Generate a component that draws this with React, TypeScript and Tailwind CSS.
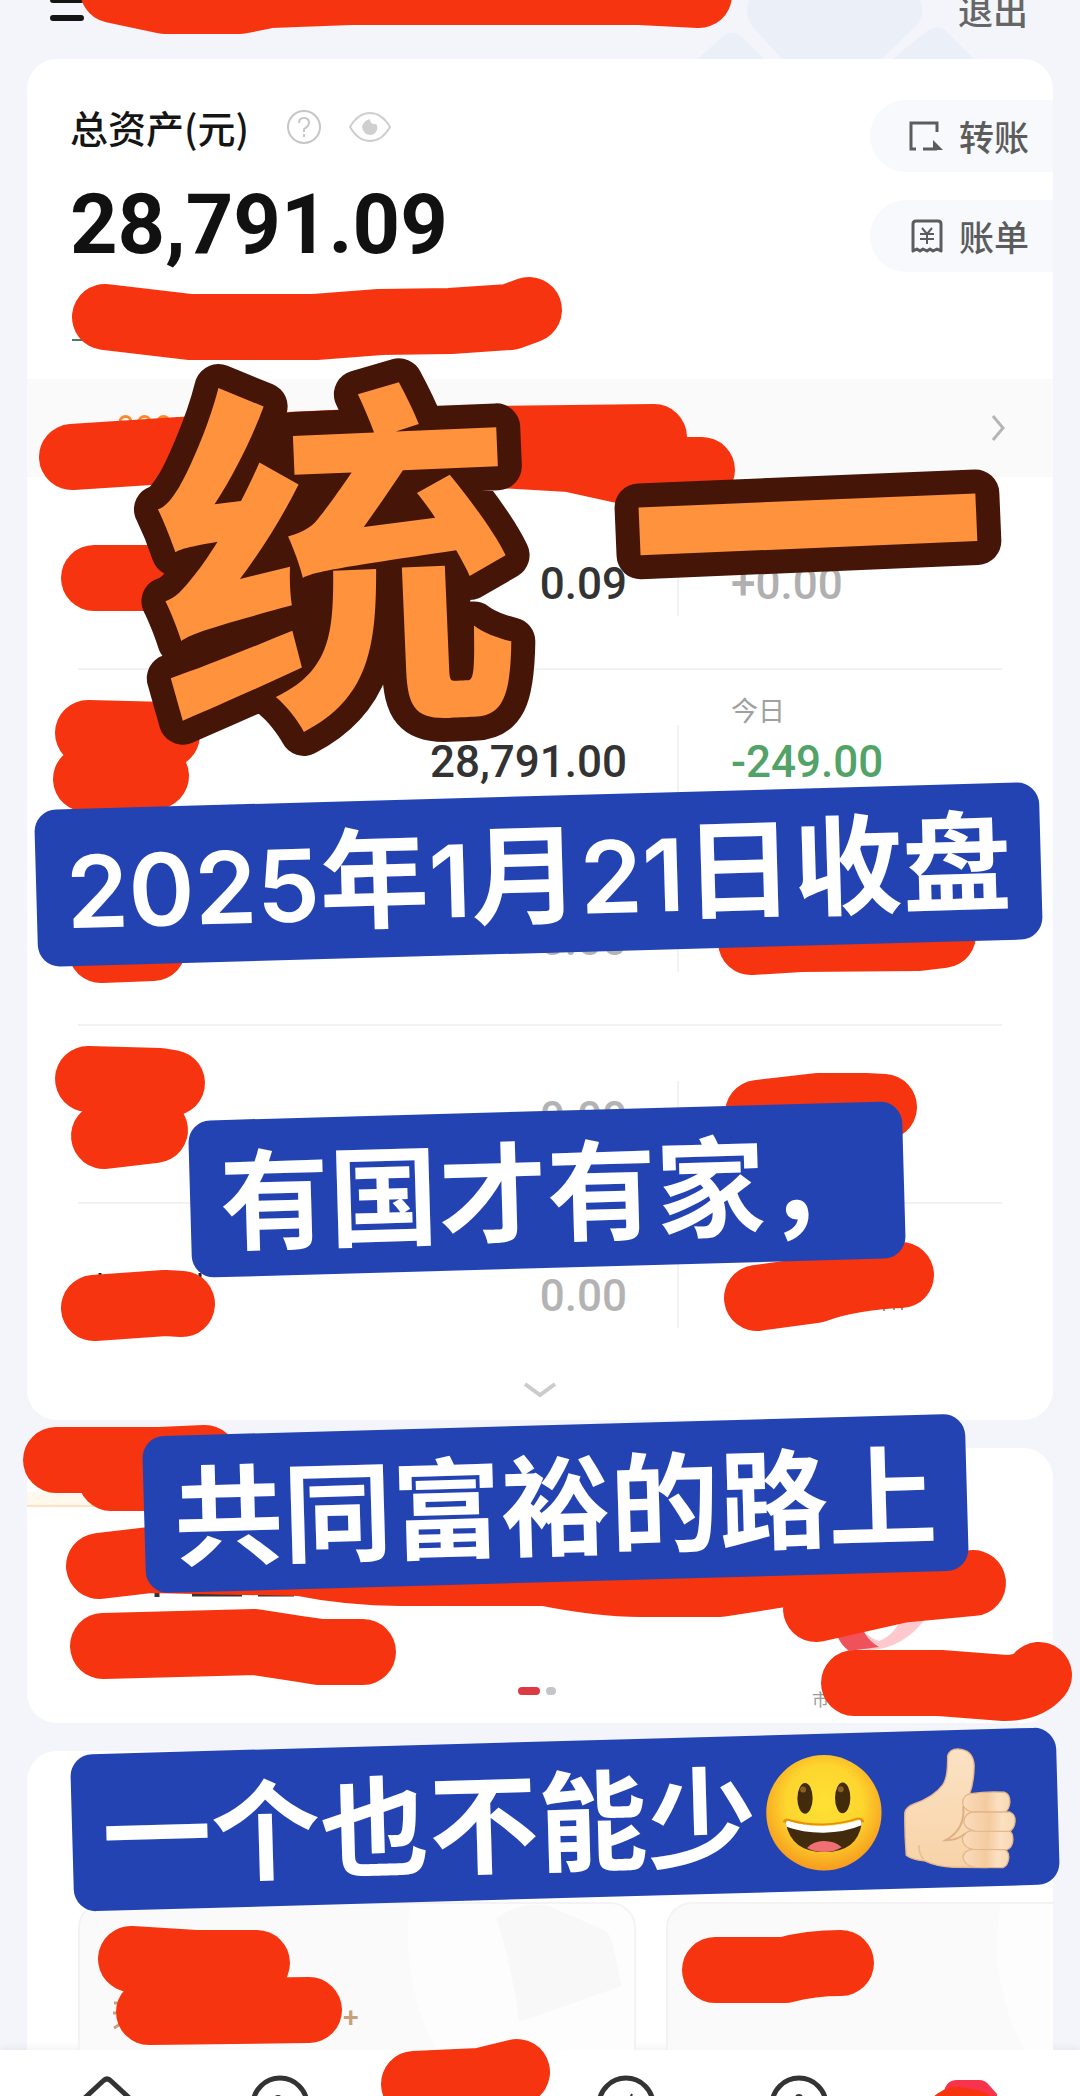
import type { ReactNode } from "react";

const ACCOUNTS = [
  { value: "0.09", active: true, label: "", today: "+0.00", tone: "text-[#b0b0b0]" },
  { value: "28,791.00", active: true, label: "今日", today: "-249.00", tone: "text-[#52a368]" },
  { value: "0.00", active: false, label: "", today: "", tone: "" },
  { value: "0.00", active: false, label: "", today: "", tone: "" },
  { value: "0.00", active: false, label: "", today: "", tone: "" },
];

const STROKES = [
  "M113 -10 L165 1 L240 1 L270 -5 L350 -8 L640 -8 L699 -5",
  "M105 317 L190 327 L315 327 L380 322 L450 321 L510 317 L529 310",
  "M72 457 L180 450 L400 440 L654 437",
  "M500 455 L570 459 L620 470 L702 470",
  "M94 578 L180 578",
  "M88 733 L167 735",
  "M86 779 L156 776",
  "M101 950 L153 948",
  "M751 942 L800 939 L918 938 L943 935",
  "M88 1079 L160 1081 L172 1083",
  "M104 1136 L155 1130",
  "M758 1113 L818 1106 L865 1106 L884 1107",
  "M94 1308 L165 1303 L182 1304",
  "M757 1298 L815 1290 Q850 1277 901 1275",
  "M56 1460 L160 1460 L205 1458",
  "M111 1478 L170 1478",
  "M99 1566 L150 1560 L300 1563 Q350 1573 400 1573 L545 1573 Q600 1584 640 1584 L720 1584 L790 1573",
  "M816 1609 L900 1590 L973 1583",
  "M103 1646 L255 1642 L300 1649 L320 1652 L363 1652",
  "M854 1683 L940 1683 L1005 1688 Q1028 1688 1039 1675",
  "M131 1959 L195 1963 L257 1963",
  "M149 2012 L309 2010",
  "M715 1970 L785 1970 Q810 1963 841 1963",
  "M414 2084 L480 2081 L517 2072",
  "M957 2120 L970 2122",
];

const Header = () => {
  return (
    <header className="relative flex h-[59px] shrink-0 items-start justify-between overflow-hidden pr-[52px] pl-[50px]">
      <svg
        className="absolute top-0 right-[105px] h-[59px] w-[280px]"
        viewBox="695 0 280 59"
        fill="#ebf0f8"
        aria-hidden="true"
      >
        <path d="M749 0 Q744 14 752 26 L782 59 L882 59 L918 24 Q925 14 920 0 Z" />
        <path d="M698 59 L722 37 Q732 28 742 37 L764 59 Z" />
        <path d="M892 59 L926 32 Q936 23 947 32 L974 59 Z" />
      </svg>
      <button aria-label="菜单" className="h-[21px]">
        <svg width="34" height="21" viewBox="0 0 34 21" stroke="#151515" strokeWidth="6" strokeLinecap="round">
          <path d="M3 0 H31 M3 18 H31" />
        </svg>
      </button>
      <button className="relative -mt-2 text-[35px] leading-9 font-medium text-[#666]">退出</button>
    </header>
  );
};

const TransferIcon = () => (
  <svg width="34" height="32" viewBox="0 0 34 32" fill="none" stroke="#5c5c5c" strokeWidth="3">
    <path d="M7 29 H2 V3 H28 V12" />
    <path d="M14 29 H28" />
    <path d="M24 20 L34 30 H24 Z" fill="#5c5c5c" stroke="none" />
  </svg>
);

const BillIcon = () => (
  <svg width="34" height="34" viewBox="0 0 34 34" fill="none" stroke="#5c5c5c" strokeWidth="3" strokeLinejoin="round">
    <path d="M4 32 V5 Q4 2 7 2 H29 Q32 2 32 5 V32 L28 30 L24 32 L21 30 L18 32 L14 30 L11 32 L8 30 Z" />
    <path d="M13 9 L18 15 L23 9 M18 15 V25 M11 15 H25 M11 20 H25" strokeWidth="2" />
  </svg>
);

const ActionButton = ({ icon, children }: { icon: ReactNode; children: ReactNode }) => {
  return (
    <button className="flex h-[72px] items-center rounded-l-full bg-[#f7f9fc] pr-[24px] pl-[39px] text-[35px] leading-none font-medium text-[#5c5c5c]">
      <span className="mr-[16px]">{icon}</span>
      <span className="pb-0.5">{children}</span>
    </button>
  );
};

const Summary = () => {
  return (
    <div className="flex h-[320px] justify-between pl-[43px]">
      <div className="pt-[44px]">
        <div className="flex items-center">
          <h1 className="text-[38px] leading-[48px] font-medium text-[#151515]">总资产(元)</h1>
          <button aria-label="说明" className="ml-[37px]">
            <svg width="36" height="36" viewBox="0 0 36 36" fill="none" stroke="#c6c6c6" strokeWidth="2">
              <circle cx="18" cy="18" r="16" />
              <path d="M13 14 Q13 9 18 9 Q23 9 23 14 Q23 17 18 20 V23 M18 25 V28" />
            </svg>
          </button>
          <button aria-label="隐藏金额" className="ml-[26px]">
            <svg width="44" height="32" viewBox="0 0 44 32" fill="none" stroke="#cfcfcf" strokeWidth="2">
              <path d="M2 16 Q10 2 22 2 Q34 2 42 16 Q34 30 22 30 Q10 30 2 16 Z" />
              <path d="M22 8 Q22 14 28 13 Q30 15 29 19 Q27 24 22 24 Q15 23 14 16 Q15 10 22 8 Z" fill="#cfcfcf" stroke="none" />
            </svg>
          </button>
        </div>
        <div className="mt-[32px] font-[Roboto] text-[83px] leading-[84px] font-bold text-[#111]">28,791.09</div>
      </div>
      <div className="flex flex-col gap-7 pt-[41px]">
        <ActionButton icon={<TransferIcon />}>转账</ActionButton>
        <ActionButton icon={<BillIcon />}>账单</ActionButton>
      </div>
    </div>
  );
};

const AccountRow = ({ account, last }: { account: (typeof ACCOUNTS)[number]; last: boolean }) => {
  return (
    <li
      className={`grid h-[178px] grid-cols-[601fr_323fr] pt-[55px] ${last ? "" : "border-b-2 border-[#f2f2f3]"}`}
    >
      <div
        className={`flex h-[69px] items-end justify-end border-r-2 border-[#f2f2f3] pr-[50px] font-[Roboto] text-[44px] leading-[64px] font-medium ${
          account.active ? "text-[#333]" : "text-[#b3b3b3]"
        }`}
      >
        {account.value}
      </div>
      <div className="flex h-[69px] flex-col justify-end pl-[52px]">
        {account.label && <span className="-mt-9 text-[27px] leading-10 text-[#a0a0a0]">{account.label}</span>}
        <span className={`font-[Roboto] text-[44px] leading-[64px] font-medium ${account.tone}`}>{account.today}</span>
      </div>
    </li>
  );
};

const AssetCard = () => {
  return (
    <section className="mx-[27px] h-[1361px] shrink-0 overflow-hidden rounded-[30px] bg-white">
      <Summary />
      <div className="flex h-[98px] items-center justify-end bg-[#fafafa] pr-[48px]">
        <button aria-label="查看详情">
          <svg width="14" height="28" viewBox="0 0 14 28" fill="none" stroke="#b5b5b5" strokeWidth="3">
            <path d="M2 2 L12 14 L2 26" />
          </svg>
        </button>
      </div>
      <ul className="mx-[51px] mt-[15px]">
        {ACCOUNTS.map((account, i) => (
          <AccountRow key={i} account={account} last={i === ACCOUNTS.length - 1} />
        ))}
      </ul>
      <button aria-label="展开" className="mx-auto block">
        <svg width="34" height="18" viewBox="0 0 34 18" fill="none" stroke="#cbcbcb" strokeWidth="4">
          <path d="M2 2 L17 13 L32 2" />
        </svg>
      </button>
    </section>
  );
};

const PromoCard = () => {
  return (
    <section className="relative mx-[27px] mt-7 flex h-[275px] shrink-0 flex-col overflow-hidden rounded-[30px] bg-white">
      <div className="mt-[44px] h-[15px] w-[90px] border-b-2 border-[#fbe3c4] bg-[#fff8ec]" />
      <svg
        className="absolute right-[106px] bottom-[72px] h-[50px] w-[120px]"
        viewBox="0 0 120 50"
        fill="none"
        aria-hidden="true"
      >
        <path d="M22 18 Q40 36 52 40 Q68 34 76 14 L106 0 Q100 24 74 40 Q50 54 24 46 Z" fill="#fdc9cc" />
        <path d="M6 16 Q8 40 22 50 L52 46 Q34 36 32 12 Z" fill="#f0525c" />
      </svg>
      <div className="mt-auto mb-[28px] flex items-center justify-center gap-1.5 pr-1.5">
        <span className="h-2 w-[22px] rounded-full bg-[#dc3a43]" />
        <span className="h-2 w-2.5 rounded-full bg-[#c5c5c9]" />
      </div>
      <span className="absolute bottom-[12px] left-[785px] text-[17px] leading-6 text-[#999]">市</span>
    </section>
  );
};

const TileArt = () => (
  <svg className="absolute top-0 right-0 h-[150px] w-[230px]" viewBox="0 0 230 150" aria-hidden="true">
    <path d="M6 0 Q-4 80 35 150 H230 V0 Z" fill="#fdfdfd" />
    <path d="M92 14 Q120 -4 145 2 L200 26 Q206 30 208 38 L218 82 L115 118 Q108 60 92 14 Z" fill="#f8f8f8" />
  </svg>
);

const TileCard = () => {
  return (
    <section className="mx-[27px] mt-7 min-h-0 flex-1 overflow-hidden rounded-t-[30px] bg-white pt-[151px] pl-[51px]">
      <div className="flex h-[240px] gap-[30px]">
        <div className="relative w-[558px] shrink-0 overflow-hidden rounded-[26px] border-2 border-[#f3f3f3] bg-[#fafafa]">
          <TileArt />
          <span className="absolute top-[92px] left-[263px] font-[Roboto] text-[28px] leading-[44px] font-medium text-[#c6a17b]">
            +
          </span>
        </div>
        <div className="relative flex-1 overflow-hidden rounded-l-[26px] border-2 border-r-0 border-[#f3f3f3] bg-[#fafafa]">
          <svg className="absolute top-0 right-0 h-[150px] w-[58px]" viewBox="0 0 58 150" aria-hidden="true">
            <path d="M6 0 Q-8 80 32 150 H58 V0 Z" fill="#fdfdfd" />
          </svg>
        </div>
      </div>
    </section>
  );
};

const TabBar = () => {
  return (
    <nav className="grid h-[46px] shrink-0 grid-cols-[repeat(6,173px)] justify-start overflow-hidden bg-white pl-[20px] shadow-[0_-2px_8px_rgba(0,0,0,0.06)]">
      <a href="#home" aria-label="首页" className="flex justify-center pt-[25px]">
        <svg width="72" height="60" viewBox="0 0 72 60" fill="none" stroke="#333" strokeWidth="5">
          <path d="M4 32 L32 6 Q36 2 40 6 L68 32 V58 H4 Z" />
        </svg>
      </a>
      <a href="#market" aria-label="行情" className="flex justify-center pt-[25px]">
        <svg width="60" height="60" viewBox="0 0 60 60" fill="none" stroke="#333" strokeWidth="5">
          <circle cx="30" cy="30" r="27" />
          <circle cx="28" cy="24" r="4" fill="#333" stroke="none" />
        </svg>
      </a>
      <a href="#trade" aria-label="交易" />
      <a href="#news" aria-label="资讯" className="flex justify-center pt-[25px]">
        <svg width="60" height="60" viewBox="0 0 60 60" fill="none" stroke="#333" strokeWidth="5">
          <circle cx="30" cy="30" r="27" />
          <path d="M36 19 L33 26" strokeWidth="2" />
        </svg>
      </a>
      <a href="#finance" aria-label="理财" className="flex justify-center pt-[25px]">
        <svg width="60" height="60" viewBox="0 0 60 60" fill="none" stroke="#333" strokeWidth="5">
          <circle cx="30" cy="30" r="27" />
          <circle cx="30" cy="23" r="4" fill="#333" stroke="none" />
        </svg>
      </a>
      <a href="#me" aria-label="我的" className="flex justify-center pt-[30px]">
        <svg width="62" height="60" viewBox="0 0 62 60">
          <path d="M3 12 Q5 0 16 0 H38 Q44 0 48 5 L56 14 V60 H3 Z" fill="#f8344c" />
        </svg>
      </a>
    </nav>
  );
};

const Scribbles = () => {
  return (
    <svg className="absolute top-0 left-0 w-full" viewBox="0 0 1080 2096" fill="none" aria-hidden="true">
      <path d="M72 340 H90" stroke="#4f7a70" strokeWidth="2" />
      <path d="M120 422 a5 5 0 0 1 11 0 M139 422 a5 5 0 0 1 11 0 M158 422 a5 5 0 0 1 11 0" stroke="#f98a2c" strokeWidth="3" />
      <path d="M100 1273 V1280 M200 1273 V1280" stroke="#222" strokeWidth="3" />
      <path d="M157 1590 V1597 M192 1594 H242 M258 1594 H294" stroke="#333" strokeWidth="5" />
      <path d="M114 2003 H124 M113 2013 H124 M114 2028 L122 2023" stroke="#c6a17b" strokeWidth="3" />
      <path d="M884 1311 V1307 M894 1310 V1307 M902 1310 V1307" stroke="#999" strokeWidth="2" />
      <g stroke="#f6340f" strokeWidth="66" strokeLinecap="round" strokeLinejoin="round">
        {STROKES.map((d) => (
          <path key={d} d={d} />
        ))}
      </g>
    </svg>
  );
};

const Grin = () => (
  <svg className="h-[136px] w-[136px]" viewBox="48 131 408 408" role="img" aria-label="笑脸">
    <defs>
      <radialGradient id="grin" cx="50%" cy="42%" r="56%">
        <stop offset="0" stopColor="#fee133" />
        <stop offset="0.6" stopColor="#fdd52e" />
        <stop offset="1" stopColor="#f7a01f" />
      </radialGradient>
    </defs>
    <g transform="rotate(2 252 335)">
      <circle cx="252" cy="335" r="173" fill="url(#grin)" />
      <ellipse cx="195" cy="292" rx="23" ry="46" fill="#422b0d" />
      <ellipse cx="308" cy="290" rx="23" ry="46" fill="#422b0d" />
      <circle cx="189" cy="266" r="9" fill="#896024" />
      <circle cx="302" cy="264" r="9" fill="#896024" />
      <path d="M138 368 Q134 360 144 360 Q200 378 252 376 Q310 374 358 356 Q368 354 366 364 Q354 452 254 453 Q156 454 138 368 Z" fill="#422b0d" />
      <path d="M138 368 Q136 360 146 360 Q200 376 252 374 Q310 372 356 356 Q368 354 365 372 Q314 394 252 395 Q190 396 140 378 Z" fill="#fff" />
      <path d="M202 441 Q222 420 252 420 Q286 420 306 438 Q282 453 254 453 Q224 453 202 441 Z" fill="#f06f74" />
      <path d="M132 362 Q138 352 150 358 Q200 372 252 370 Q306 368 352 352 Q364 350 370 360" fill="none" stroke="#eb8f00" strokeWidth="6" strokeLinecap="round" />
    </g>
  </svg>
);

const ThumbUp = () => (
  <svg className="h-[136px] w-[136px]" viewBox="454 126 408 408" role="img" aria-label="点赞">
    <defs>
      <linearGradient id="hand" x1="0" y1="0" x2="0" y2="1">
        <stop offset="0" stopColor="#fbe2c4" />
        <stop offset="1" stopColor="#f8d3a8" />
      </linearGradient>
      <linearGradient id="finger" x1="0" y1="0" x2="1" y2="0">
        <stop offset="0" stopColor="#fadcbc" />
        <stop offset="0.5" stopColor="#f4cb9f" />
        <stop offset="0.75" stopColor="#fbe0c2" />
        <stop offset="1" stopColor="#f9d9b4" />
      </linearGradient>
    </defs>
    <g transform="rotate(2 658 330)">
      <path
        d="M620 172 Q626 150 650 150 Q698 152 700 200 Q700 250 686 288 L740 300 V505 H640 Q590 504 552 486 Q516 484 498 470 Q492 400 493 342 Q496 326 520 316 Q580 294 606 258 Q622 236 620 172 Z"
        fill="url(#hand)"
        stroke="#e4b78b"
        strokeWidth="4"
      />
      <g fill="url(#finger)" stroke="#e4b78b" strokeWidth="4">
        <path d="M690 284 Q740 276 792 279 Q808 284 808 308 Q806 334 790 340 H696 Q668 334 666 310 Q668 288 690 284 Z" />
        <path d="M700 450 H792 Q806 456 806 474 Q804 500 788 505 H706 Q672 500 668 474 Q672 452 700 450 Z" />
        <path d="M700 394 H806 Q818 400 818 422 Q816 446 800 451 H700 Q668 446 666 420 Q670 396 700 394 Z" />
        <path d="M700 338 H808 Q826 346 824 366 Q822 390 806 396 H704 Q672 390 670 368 Q672 342 700 338 Z" />
      </g>
      <path d="M668 322 Q676 390 616 424 Q650 424 674 404" fill="none" stroke="#e0b084" strokeWidth="6" />
      <path d="M536 440 Q536 466 550 482" fill="none" stroke="#e8bf92" strokeWidth="5" />
    </g>
  </svg>
);

const Banner = ({ className, text, children }: { className: string; text: ReactNode; children?: ReactNode }) => {
  return (
    <div
      className={`absolute flex h-[157px] -rotate-[1.6deg] items-center rounded-[22px] bg-[#2343b3] px-[30px] text-[109px] leading-none font-bold whitespace-nowrap text-white ${className}`}
    >
      <span className="pb-2">{text}</span>
      {children}
    </div>
  );
};

const Digits = ({ children }: { children: ReactNode }) => (
  <span className="font-[Inter] text-[100px] font-semibold">{children}</span>
);

const Headline = () => {
  return (
    <svg
      className="absolute top-[340px] left-0 h-[440px] w-[1080px]"
      viewBox="0 340 1080 440"
      fill="#ff923c"
      stroke="#451507"
      strokeWidth="48"
      strokeLinejoin="round"
      paintOrder="stroke"
      fontSize="364"
      fontWeight="700"
      textAnchor="middle"
    >
      <g transform="rotate(-2.4 572 540)">
        <text x="335" y="686">
          统
        </text>
        <text x="808" y="676">
          一
        </text>
      </g>
    </svg>
  );
};

const Stickers = () => {
  return (
    <>
      <Headline />
      <Banner
        className="top-[796px] left-[36px]"
        text={
          <>
            <Digits>2025</Digits>年<Digits>1</Digits>月<Digits>21</Digits>日收盘
          </>
        }
      />
      <Banner className="top-[1111px] left-[190px]" text="有国才有家，" />
      <Banner className="top-[1425px] left-[144px]" text="共同富裕的路上" />
      <Banner className="top-[1741px] left-[72px]" text="一个也不能少">
        <Grin />
        <ThumbUp />
      </Banner>
    </>
  );
};

const App = () => {
  return (
    <div className="relative flex h-screen flex-col overflow-hidden bg-[#f3f5fa] font-['Noto_Sans_CJK_SC',sans-serif]">
      <Header />
      <main className="flex min-h-0 flex-1 flex-col">
        <AssetCard />
        <PromoCard />
        <TileCard />
      </main>
      <TabBar />
      <Scribbles />
      <Stickers />
    </div>
  );
};

export default App;
